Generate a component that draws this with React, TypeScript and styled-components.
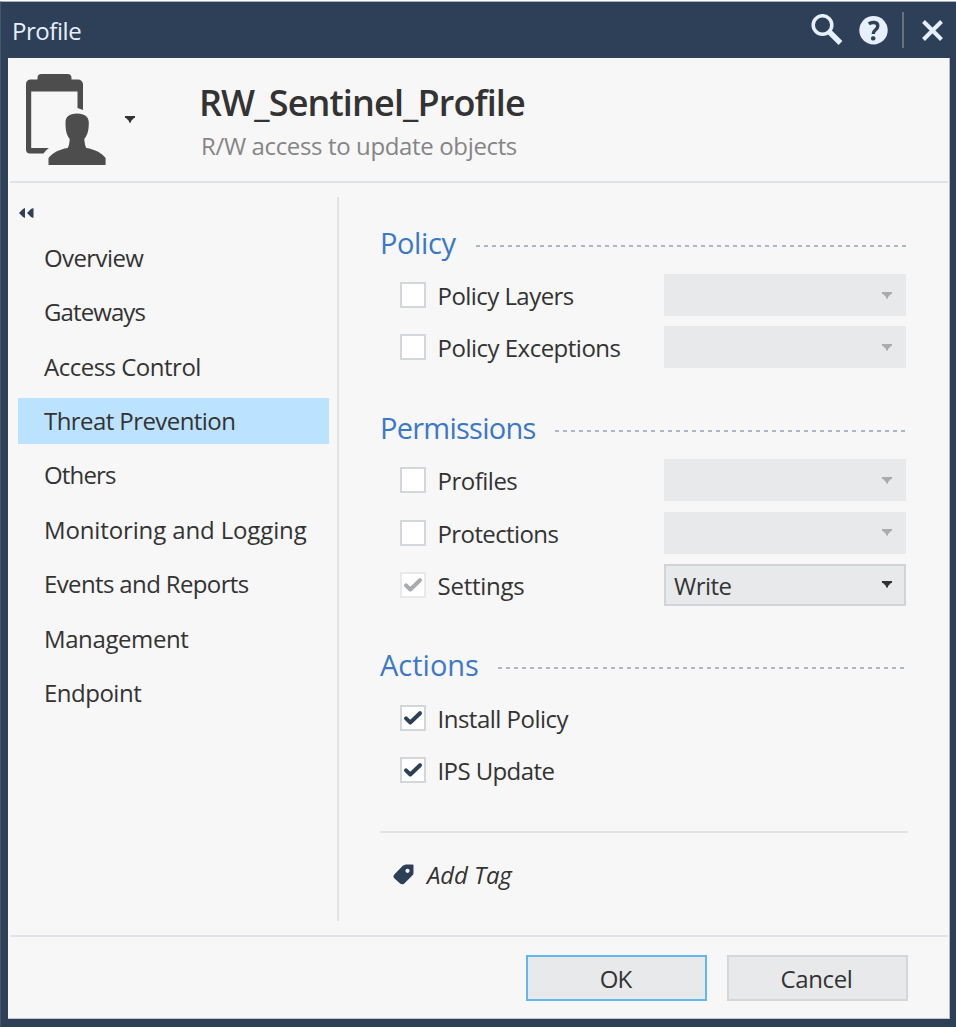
import React from "react";
import styled, { createGlobalStyle } from "styled-components";

const navy = "#2e4057";
const surface = "#f7f7f7";
const line = "#e0e3e8";
const ink = "#333333";

const Global = createGlobalStyle`
  * { box-sizing: border-box; }
  body { margin: 0; background: #fff; }
  svg { display: block; flex: none; }
  button { font: inherit; color: inherit; padding: 0; margin: 0; cursor: pointer; }
`;

const Window = styled.div`
  display: flex;
  flex-direction: column;
  width: 956px;
  height: 1026px;
  margin-top: 1px;
  padding: 0 6px 8px 7px;
  border-top: 1px solid #a9b0ba;
  border-left: 1px solid #46566c;
  background: ${navy};
  color: ${ink};
  font: 24px/32px "Open Sans", "Noto Sans", sans-serif;
`;

const Text = styled.span<{ $track?: number }>`
  white-space: nowrap;
  letter-spacing: ${(p) => p.$track ?? -0.5}px;
`;

const TitleBar = styled.header`
  display: flex;
  align-items: center;
  height: 56px;
  flex: none;
  padding: 0 7px 0 4px;
  color: #e6effc;
`;

const WindowTitle = styled(Text)`
  flex: 1;
  padding-top: 2px;
`;

const BarButton = styled.button<{ $gap: number }>`
  border: 0;
  background: none;
  margin-right: ${(p) => p.$gap}px;
`;

const BarDivider = styled.i`
  width: 2px;
  height: 36px;
  margin-right: 18px;
  background: #68727f;
`;

const Surface = styled.div`
  display: flex;
  flex-direction: column;
  flex: 1;
  padding: 0 1px 0 2px;
  background: ${surface};
  border-right: 1px solid #b4bac3;
  border-bottom: 1px solid #c3c8ce;
`;

const ProfileHeader = styled.div`
  display: flex;
  height: 125px;
  flex: none;
  padding: 15px 0 0 15px;
  border-bottom: 2px solid ${line};
`;

const IconMenu = styled.button`
  display: flex;
  align-items: flex-start;
  gap: 18px;
  width: 174px;
  border: 0;
  background: none;
  & > svg:last-child { margin-top: 43px; }
`;

const Names = styled.div`
  display: flex;
  flex-direction: column;
`;

const ProfileName = styled(Text)`
  margin-top: 6px;
  font-size: 36px;
  line-height: 48px;
  font-weight: 600;
`;

const Description = styled(Text)`
  margin-top: 3px;
  padding-left: 2px;
  line-height: 32px;
  color: #858585;
`;

const Body = styled.div`
  display: flex;
  flex: 1;
  min-height: 0;
`;

const Sidebar = styled.div`
  display: flex;
  flex-direction: column;
  width: 329px;
  margin: 14px 0;
  padding: 10px 8px 0 8px;
  border-right: 2px solid ${line};
`;

const Collapse = styled.button`
  align-self: flex-start;
  border: 0;
  background: none;
  padding-left: 1px;
  height: 12px;
`;

const Nav = styled.nav`
  display: flex;
  flex-direction: column;
  gap: 8.4px;
  margin-top: 16.3px;
`;

const NavItem = styled.a<{ $active?: boolean }>`
  display: flex;
  align-items: center;
  height: 46px;
  padding: 0 0 1px 26px;
  background: ${(p) => (p.$active ? "#bbe3ff" : "transparent")};
`;

const Main = styled.main`
  display: flex;
  flex-direction: column;
  width: 528px;
  margin-left: 41px;
  padding-top: 42px;
`;

const Section = styled.section`
  display: flex;
  flex-direction: column;
  width: 526px;
  margin-bottom: 42px;
`;

const SectionHead = styled.div`
  display: flex;
  align-items: center;
  height: 40px;
  margin-bottom: 9px;
`;

const SectionTitle = styled(Text)<{ $width: number }>`
  flex: none;
  width: ${(p) => p.$width}px;
  padding-bottom: 5px;
  font-size: 29px;
  line-height: 40px;
  color: #3b78c9;
`;

const Dashes = styled.div`
  flex: 1;
  height: 2px;
  margin-top: 1px;
  background: repeating-linear-gradient(90deg, #acb6cb 0 4px, transparent 4px 8.04px);
`;

const Rows = styled.div`
  display: flex;
  flex-direction: column;
  gap: 10.3px;
`;

const Row = styled.label`
  display: flex;
  align-items: center;
  height: 42px;
  padding-left: 20px;
`;

const RowLabel = styled(Text)`
  flex: 1;
  padding: 2px 0 0 11.5px;
`;

const Box = styled.span<{ $muted?: boolean }>`
  display: grid;
  place-items: center;
  width: 26px;
  height: 26px;
  flex: none;
  background: #fff;
  border: 2px solid ${(p) => (p.$muted ? "#e8e9ea" : "#d3d7dc")};
`;

const Select = styled.span<{ $enabled?: boolean }>`
  display: flex;
  align-items: center;
  justify-content: space-between;
  width: 242px;
  height: 42px;
  padding: 0 12px 0 8px;
  background: #e8e9ea;
  border: 2px solid ${(p) => (p.$enabled ? "#d0d4d8" : "#e8e9ea")};
`;

const SelectValue = styled(Text)`
  padding-top: 2px;
`;

const TagRow = styled.div`
  display: flex;
  align-items: center;
  gap: 13px;
  border-top: 2px solid ${line};
  margin-top: -2px;
  height: 86px;
  padding-left: 13px;
  font-style: italic;
  & > svg { margin-top: -2px; }
`;

const Footer = styled.footer`
  display: flex;
  flex: none;
  justify-content: flex-end;
  gap: 20px;
  height: 83px;
  padding: 18px 40px 0 0;
  border-top: 2px solid ${line};
`;

const Button = styled.button<{ $primary?: boolean }>`
  width: 181px;
  height: 46px;
  padding: 2px 2px 0 0;
  background: #e8e9ea;
  border: 2px solid ${(p) => (p.$primary ? "#64b6ee" : "#d3d6da")};
`;

const Arrow = ({ color = ink }: { color?: string }) => (
  <svg width="10" height="7" viewBox="0 0 10 7">
    <path d="M0 0h10v2H9L6 5v1.500H4V5L1 2H0z" fill={color} />
  </svg>
);

const Check = ({ color = navy }: { color?: string }) => (
  <svg width="22" height="22" viewBox="0 0 22 22">
    <path d="M4 12l4.300 4.100L18 6.800" transform="translate(0 -.6)" fill="none" stroke={color} strokeWidth="4" strokeLinecap="round" strokeLinejoin="round" />
  </svg>
);

const ProfileIcon = () => (
  <svg width="82" height="92" viewBox="25 73 82 92" fill="#4d4d4d">
    <path d="M30 79.500h7.500V78a4 4 0 0 1 4-4h26a4 4 0 0 1 4 4v1.500H78a5 5 0 0 1 5 5V110l-5.500-2V91.500H31.200V148H49q-3.500 2-5.500 5.500H30a4 4 0 0 1-4-4v-65a5 5 0 0 1 4-5z" />
    <path d="M77 113.500c8 0 11.800 3.500 11.800 9 0 8-1.300 12.500-4.500 16.500.3 4.500 1 7.500 2 9 8.500 1.300 15.500 5 19.300 10v7H48.500v-7c4-5 10.500-8.700 19.200-10 1-1.500 1.800-4.500 2-9-3.200-4-4.200-8.500-4.200-16.500 0-5.500 3.500-9 11.500-9z" />
  </svg>
);

const SearchIcon = () => (
  <svg width="32" height="32" viewBox="0 0 32 32" fill="none" stroke="#e6effc">
    <circle cx="11.500" cy="11" r="9.300" strokeWidth="3.500" />
    <path d="M18 17.500l11.500 11.500" strokeWidth="5.400" />
  </svg>
);

const HelpIcon = () => (
  <svg width="29" height="29" viewBox="0 0 29 29">
    <circle cx="14.500" cy="14.300" r="14.200" fill="#e6effc" />
    <path d="M9.800 7.800c2.500-1.800 9-2.300 9 2.200 0 4-4.600 3.500-4.600 8" fill="none" stroke={navy} strokeWidth="3.400" />
    <rect x="12" y="20.300" width="4.400" height="4.200" rx="1.800" fill={navy} />
  </svg>
);

const CloseIcon = () => (
  <svg width="21" height="21" viewBox="0 0 21 21" stroke="#e6effc" strokeWidth="4">
    <path d="M1.500 1.500l18 18M19.500 1.500l-18 18" />
  </svg>
);

const CollapseIcon = () => (
  <svg width="15" height="12" viewBox="0 0 15 12" fill={navy}>
    <path d="M0 6L4 2L6 1v10L4 10zM8 6l4-4L14.500 1v10l-2.500-1z" />
  </svg>
);

const TagIcon = () => (
  <svg width="21" height="21" viewBox="0 0 21 21">
    <path fillRule="evenodd" d="M13 .5h6.500q1 0 1 1V9q0 1.500-1.200 2.600l-8 7.800q-2.300 1.800-4.500-.2L1.500 14.500q-2-2-.2-4L9.500 2Q11.200.5 13 .5zM14.500 4.700a2.100 2.100 0 1 0 0 4.200 2.100 2.100 0 0 0 0-4.200z" fill={navy} />
  </svg>
);

const navItems: { label: string; track: number; active?: boolean }[] = [
  { label: "Overview", track: -0.6 },
  { label: "Gateways", track: -0.9 },
  { label: "Access Control", track: -0.5 },
  { label: "Threat Prevention", track: -0.57, active: true },
  { label: "Others", track: -0.85 },
  { label: "Monitoring and Logging", track: -0.13 },
  { label: "Events and Reports", track: -0.63 },
  { label: "Management", track: -0.4 },
  { label: "Endpoint", track: -0.5 },
];

type Item = { label: string; track: number; check?: "on" | "muted"; select?: string };

const sections: { title: string; track: number; width: number; items: Item[] }[] = [
  {
    title: "Policy", track: -0.4, width: 96,
    items: [
      { label: "Policy Layers", track: -0.55, select: "" },
      { label: "Policy Exceptions", track: -0.5, select: "" },
    ],
  },
  {
    title: "Permissions", track: -0.75, width: 175,
    items: [
      { label: "Profiles", track: -0.5, select: "" },
      { label: "Protections", track: -0.6, select: "" },
      { label: "Settings", track: -0.25, check: "muted", select: "Write" },
    ],
  },
  {
    title: "Actions", track: 0, width: 118,
    items: [
      { label: "Install Policy", track: -0.5, check: "on" },
      { label: "IPS Update", track: -0.6, check: "on" },
    ],
  },
];

export default function App() {
  return (
    <>
      <Global />
      <Window>
        <TitleBar>
          <WindowTitle $track={-0.45}>Profile</WindowTitle>
          <BarButton $gap={16} aria-label="Search"><SearchIcon /></BarButton>
          <BarButton $gap={14} aria-label="Help"><HelpIcon /></BarButton>
          <BarDivider />
          <BarButton $gap={0} aria-label="Close"><CloseIcon /></BarButton>
        </TitleBar>
        <Surface>
          <ProfileHeader>
            <IconMenu aria-label="Profile icon">
              <ProfileIcon />
              <Arrow />
            </IconMenu>
            <Names>
              <ProfileName $track={-0.87}>RW_Sentinel_Profile</ProfileName>
              <Description $track={-0.36}>R/W access to update objects</Description>
            </Names>
          </ProfileHeader>
          <Body>
            <Sidebar>
              <Collapse aria-label="Collapse"><CollapseIcon /></Collapse>
              <Nav>
                {navItems.map((n) => (
                  <NavItem key={n.label} $active={n.active}>
                    <Text $track={n.track}>{n.label}</Text>
                  </NavItem>
                ))}
              </Nav>
            </Sidebar>
            <Main>
              {sections.map((s) => (
                <Section key={s.title}>
                  <SectionHead>
                    <SectionTitle $track={s.track} $width={s.width}>{s.title}</SectionTitle>
                    <Dashes />
                  </SectionHead>
                  <Rows>
                    {s.items.map((i) => (
                      <Row key={i.label}>
                        <Box $muted={i.check === "muted"}>
                          {i.check && <Check color={i.check === "muted" ? "#a9abad" : navy} />}
                        </Box>
                        <RowLabel $track={i.track}>{i.label}</RowLabel>
                        {i.select !== undefined && (
                          <Select $enabled={!!i.select}>
                            <SelectValue>{i.select}</SelectValue>
                            <Arrow color={i.select ? ink : "#a9abad"} />
                          </Select>
                        )}
                      </Row>
                    ))}
                  </Rows>
                </Section>
              ))}
              <TagRow>
                <TagIcon />
                <Text $track={-0.1}>Add Tag</Text>
              </TagRow>
            </Main>
          </Body>
          <Footer>
            <Button $primary><Text $track={-1}>OK</Text></Button>
            <Button><Text $track={-0.4}>Cancel</Text></Button>
          </Footer>
        </Surface>
      </Window>
    </>
  );
}
